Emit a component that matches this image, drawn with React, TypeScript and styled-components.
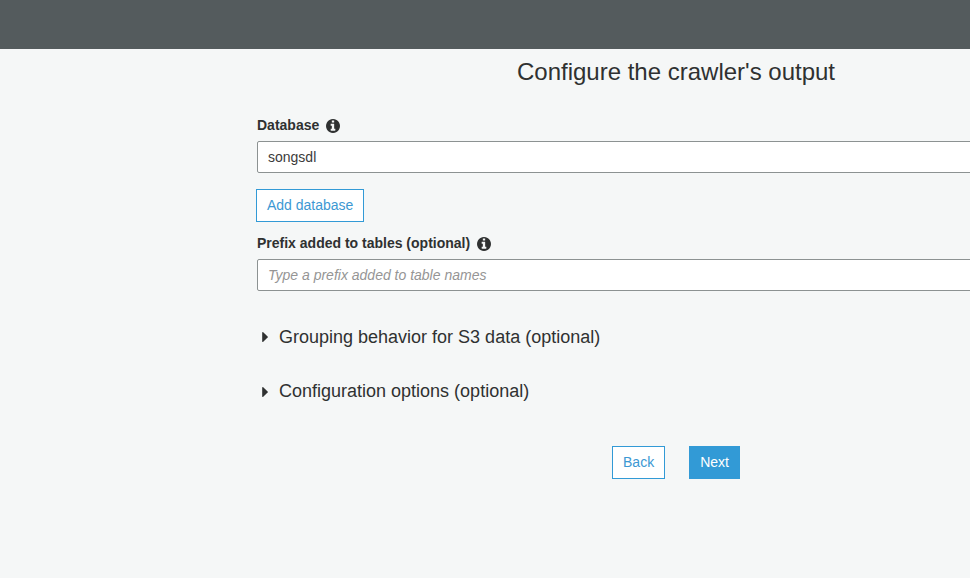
import React from 'react';
import styled, { createGlobalStyle } from 'styled-components';

const GlobalStyle = createGlobalStyle`
  * { box-sizing: border-box; }
  body {
    margin: 0;
    overflow: hidden;
    background: #f5f7f7;
    color: #2f3131;
    font: 14px/20px "Liberation Sans", Arial, sans-serif;
  }
`;
const Page = styled.div`
  height: 578px;
  overflow: hidden;
`;
const TopBar = styled.header`
  height: 49px;
  background: #545b5d;
`;
const Form = styled.main`
  display: flex;
  flex-direction: column;
  width: 838px;
  margin-left: 257px;
`;
const Title = styled.h1`
  margin: 8px 0 0;
  font-size: 24px;
  line-height: 30px;
  font-weight: 400;
  text-align: center;
`;
const Field = styled.div<{ $top: number }>`
  display: flex;
  flex-direction: column;
  gap: 6px;
  margin-top: ${(p) => p.$top}px;
`;
const Label = styled.label`
  display: flex;
  align-items: center;
  gap: 7px;
  height: 20px;
  font-weight: 700;
  svg { display: block; margin-top: 1px; }
`;
const Input = styled.input`
  height: 32px;
  padding: 0 10px;
  border: 1px solid #8c9292;
  border-radius: 2px;
  background: #fff;
  color: #3b3b3b;
  font: inherit;
  &::placeholder { color: #959595; font-style: italic; opacity: 1; }
`;
const Button = styled.button<{ $primary?: boolean }>`
  height: 33px;
  padding: 0 10px 2px;
  border: 1px solid #329ad6;
  background: ${(p) => (p.$primary ? '#329ad6' : '#fff')};
  color: ${(p) => (p.$primary ? '#fff' : '#3c98d3')};
  font: inherit;
  white-space: nowrap;
`;
const AddRow = styled.div`
  display: flex;
  margin: 16px 0 0 -1px;
`;
const Section = styled.div<{ $top: number; $caretTop: number }>`
  display: flex;
  align-items: center;
  gap: 11px;
  height: 24px;
  margin-top: ${(p) => p.$top}px;
  padding-left: 5px;
  font-size: 18px;
  svg { display: block; margin-top: ${(p) => p.$caretTop}px; }
`;
const Actions = styled.div`
  display: flex;
  justify-content: center;
  gap: 24px;
  margin-top: 43px;
`;

const InfoIcon = () => (
  <svg width="14" height="14" viewBox="0 128 1536 1536" fill="#2f3131">
    <path d="M1024 1376v-160q0-14-9-23t-23-9h-96v-512q0-14-9-23t-23-9h-320q-14 0-23 9t-9 23v160q0 14 9 23t23 9h96v320h-96q-14 0-23 9t-9 23v160q0 14 9 23t23 9h448q14 0 23-9t9-23zm-128-896v-160q0-14-9-23t-23-9h-192q-14 0-23 9t-9 23v160q0 14 9 23t23 9h192q14 0 23-9t9-23zm640 416q0 209-103 385.5t-279.5 279.5-385.5 103-385.5-103-279.5-279.5-103-385.5 103-385.5 279.5-279.5 385.5-103 385.5 103 279.5 279.5 103 385.5z" />
  </svg>
);
const Caret = () => (
  <svg width="6" height="10" viewBox="0 384 576 1024" fill="#2f3131">
    <path d="M576 896q0 26-19 45l-448 448q-19 19-45 19t-45-19-19-45v-896q0-26 19-45t45-19 45 19l448 448q19 19 19 45z" />
  </svg>
);

export default function App() {
  return (
    <Page>
      <GlobalStyle />
      <TopBar />
      <Form>
        <Title>Configure the crawler's output</Title>
        <Field $top={28}>
          <Label htmlFor="database">Database <InfoIcon /></Label>
          <Input id="database" defaultValue="songsdl" />
        </Field>
        <AddRow><Button>Add database</Button></AddRow>
        <Field $top={11}>
          <Label htmlFor="prefix">Prefix added to tables (optional) <InfoIcon /></Label>
          <Input id="prefix" placeholder="Type a prefix added to table names" />
        </Field>
        <Section $top={34} $caretTop={0}><Caret />Grouping behavior for S3 data (optional)</Section>
        <Section $top={30} $caretTop={2}><Caret />Configuration options (optional)</Section>
        <Actions>
          <Button>Back</Button>
          <Button $primary>Next</Button>
        </Actions>
      </Form>
    </Page>
  );
}
